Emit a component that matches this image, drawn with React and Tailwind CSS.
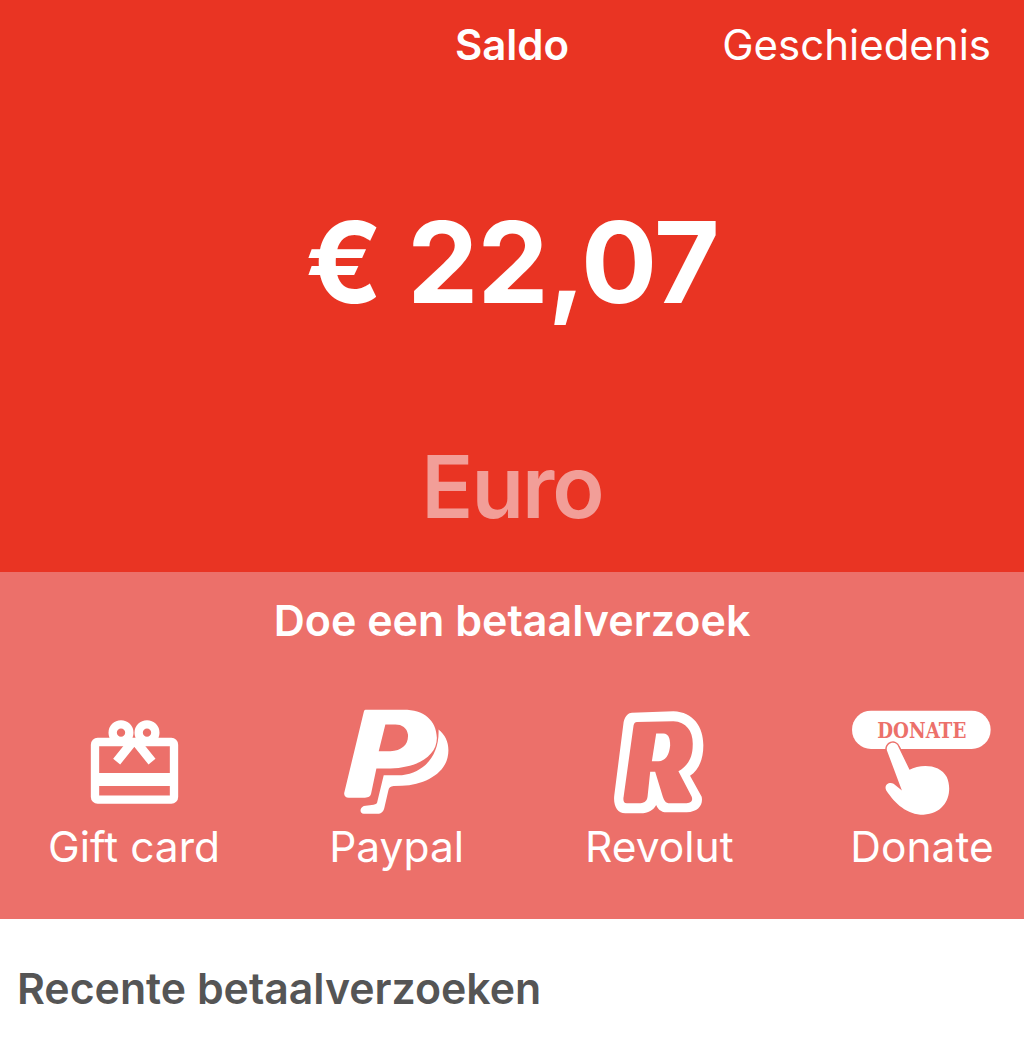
import React from 'react';

const PINK = '#EC706A';

function GiftIcon() {
  return (
    <svg viewBox="140 80 285 270" className="w-[95px] h-[90px]">
      <circle cx="242" cy="127" r="25" fill="none" stroke="white" strokeWidth="25" />
      <circle cx="320" cy="127" r="25" fill="none" stroke="white" strokeWidth="25" />
      <rect x="164" y="155" width="237" height="173" rx="8" fill="none" stroke="white" strokeWidth="25" />
      <rect x="164" y="248" width="237" height="39" fill="white" />
      <path d="M282 148L229 214M282 148L335 214" fill="none" stroke="white" strokeWidth="27" />
    </svg>
  );
}

function PaypalIcon() {
  return (
    <svg viewBox="905 60 330 325" className="w-[110px] h-[108px]">
      <path
        fill="white"
        fillRule="evenodd"
        d="M975 65L1090 65C1150 65 1188 95 1190 150C1190 205 1130 240 1050 242L1008 242L992 318C990 328 980 330 970 330L925 330C913 330 909 322 912 312L970 72C971 67 973 65 975 65ZM1035 110L1015 190L1050 190C1085 188 1105 170 1103 140C1100 120 1085 110 1065 110Z"
      />
      <path
        fill="white"
        d="M1195 125C1220 145 1230 175 1222 210C1210 260 1150 292 1085 294L1060 295C1050 296 1046 300 1044 308L1032 360C1029 373 1022 378 1012 378L970 378C958 378 956 362 970 355C985 351 1006 354 1010 345L1030 262L1085 262C1150 255 1198 205 1195 125Z"
      />
    </svg>
  );
}

function RevolutIcon() {
  return (
    <svg viewBox="125 62 280 320" className="w-[93px] h-[107px] -ml-[2px]">
      <path
        fill="white"
        d="M185 72L310 68C370 70 400 115 400 170C400 215 385 245 360 262L395 325C400 350 385 370 350 372L290 372C270 372 262 360 258 350C250 365 235 375 210 375L165 375C140 375 128 350 132 320L160 100C165 80 175 72 185 72Z"
      />
      <path
        fill={PINK}
        d="M200 100L310 98C350 100 370 130 368 170C368 210 350 235 325 248L365 325C370 340 360 345 345 345L300 345C285 345 282 335 278 325L255 250L240 250L232 325C230 340 220 345 205 345L170 345C160 345 158 335 160 325L190 110C192 103 195 100 200 100Z"
      />
      <path fill="white" d="M258 135L280 135C295 135 300 150 300 170C298 200 285 218 265 218L245 218Z" />
    </svg>
  );
}

function DonateIcon() {
  return (
    <svg viewBox="840 60 428 322" className="w-[143px] h-[107px]">
      <rect x="845" y="65" width="417" height="115" rx="57" fill="white" />
      <text
        x="921"
        y="148"
        fill={PINK}
        fontFamily="'DejaVu Serif', serif"
        fontWeight="700"
        fontSize="66"
        textLength="268"
        lengthAdjust="spacingAndGlyphs"
      >
        DONATE
      </text>
      <path
        fill="white"
        stroke={PINK}
        strokeWidth="9"
        paintOrder="stroke"
        d="M950 185C945 165 975 150 985 175L1018 243C1050 225 1110 225 1130 265C1150 310 1130 375 1060 378C1010 378 975 345 948 305C940 290 955 278 970 285L995 305Z"
      />
    </svg>
  );
}

function PayOption({ icon, label }) {
  return (
    <div className="w-[170px] flex flex-col items-center">
      <div className="h-[108px] flex items-center justify-center">{icon}</div>
      <span className="mt-[6px] text-[42.5px] leading-[50px] text-white whitespace-nowrap">{label}</span>
    </div>
  );
}

export default function App() {
  return (
    <div className="w-[1024px] h-[1042px] overflow-hidden bg-white font-['Inter',sans-serif]">
      {/* Balance */}
      <div className="h-[572px] bg-[#E93423] flex flex-col items-center">
        <div className="w-full grid grid-cols-3 items-center pt-[20px] h-[70px] text-[42px] leading-[50px] text-white">
          <div />
          <div className="text-center font-semibold">Saldo</div>
          <div className="text-right whitespace-nowrap pr-[33px]">Geschiedenis</div>
        </div>
        <div className="mt-[124px] text-[113px] leading-[136px] font-bold tracking-[-1px] text-white whitespace-nowrap">
          € 22,07
        </div>
        <div className="mt-[105px] text-[86px] leading-[104px] font-semibold tracking-[-2px] text-[#F29E98]">Euro</div>
      </div>

      {/* Betaalverzoek */}
      <div className="h-[347px] bg-[#EC706A]">
        <div className="pt-[22px] text-center text-[43px] leading-[52px] font-semibold text-white">
          Doe een betaalverzoek
        </div>
        <div className="mt-[62px] flex justify-between pl-[49px] pr-[17px]">
          <PayOption icon={<GiftIcon />} label="Gift card" />
          <PayOption icon={<PaypalIcon />} label="Paypal" />
          <PayOption icon={<RevolutIcon />} label="Revolut" />
          <PayOption icon={<DonateIcon />} label="Donate" />
        </div>
      </div>

      {/* Recent */}
      <div className="pl-[17px] pt-[44px] text-[42.8px] leading-[52px] font-semibold text-[#555555]">
        Recente betaalverzoeken
      </div>
    </div>
  );
}
